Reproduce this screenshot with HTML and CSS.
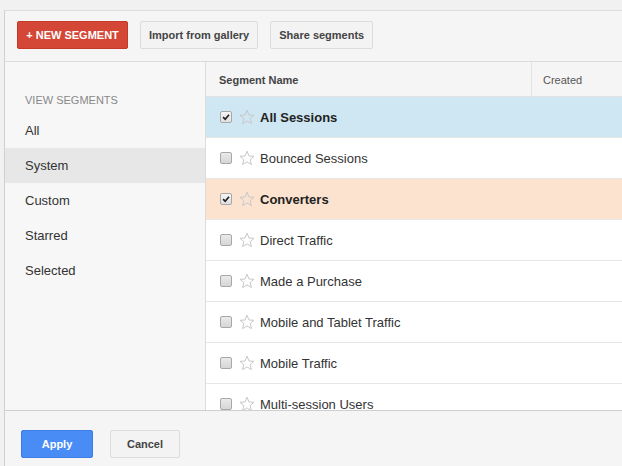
FILE: index.html
```html
<!DOCTYPE html>
<html>
<head>
<meta charset="utf-8">
<link rel="stylesheet" href="styles.css">
</head>
<body>
<div class="panel">
  <div class="toolbar">
    <button class="btn btn-red">+ NEW SEGMENT</button>
    <button class="btn">Import from gallery</button>
    <button class="btn">Share segments</button>
  </div>
  <div class="main">
    <aside class="sidebar">
      <div class="side-title">VIEW SEGMENTS</div>
      <div class="side-item">All</div>
      <div class="side-item active">System</div>
      <div class="side-item">Custom</div>
      <div class="side-item">Starred</div>
      <div class="side-item">Selected</div>
    </aside>
    <section class="table">
      <div class="thead">
        <div class="th th-name">Segment Name</div>
        <div class="th th-created">Created</div>
      </div>
      <div class="rows">
        <div class="row sel-blue">
          <span class="cb checked"><svg viewBox="0 0 12 12" width="12" height="12"><path d="M2.5 6.2 L5 8.6 L9.6 3.2" fill="none" stroke="#222" stroke-width="2"/></svg></span>
          <svg class="star" viewBox="0 0 16 16" width="16" height="16"><path d="M8 1.2 L10 6 L15 6.3 L11.2 9.5 L12.4 14.6 L8 11.9 L3.6 14.6 L4.8 9.5 L1 6.3 L6 6 Z" fill="none" stroke="#c8c8c8" stroke-width="1"/></svg>
          <span class="name bold">All Sessions</span>
        </div>
        <div class="row">
          <span class="cb"></span>
          <svg class="star" viewBox="0 0 16 16" width="16" height="16"><path d="M8 1.2 L10 6 L15 6.3 L11.2 9.5 L12.4 14.6 L8 11.9 L3.6 14.6 L4.8 9.5 L1 6.3 L6 6 Z" fill="none" stroke="#c8c8c8" stroke-width="1"/></svg>
          <span class="name">Bounced Sessions</span>
        </div>
        <div class="row sel-peach">
          <span class="cb checked"><svg viewBox="0 0 12 12" width="12" height="12"><path d="M2.5 6.2 L5 8.6 L9.6 3.2" fill="none" stroke="#222" stroke-width="2"/></svg></span>
          <svg class="star" viewBox="0 0 16 16" width="16" height="16"><path d="M8 1.2 L10 6 L15 6.3 L11.2 9.5 L12.4 14.6 L8 11.9 L3.6 14.6 L4.8 9.5 L1 6.3 L6 6 Z" fill="none" stroke="#c8c8c8" stroke-width="1"/></svg>
          <span class="name bold">Converters</span>
        </div>
        <div class="row">
          <span class="cb"></span>
          <svg class="star" viewBox="0 0 16 16" width="16" height="16"><path d="M8 1.2 L10 6 L15 6.3 L11.2 9.5 L12.4 14.6 L8 11.9 L3.6 14.6 L4.8 9.5 L1 6.3 L6 6 Z" fill="none" stroke="#c8c8c8" stroke-width="1"/></svg>
          <span class="name">Direct Traffic</span>
        </div>
        <div class="row">
          <span class="cb"></span>
          <svg class="star" viewBox="0 0 16 16" width="16" height="16"><path d="M8 1.2 L10 6 L15 6.3 L11.2 9.5 L12.4 14.6 L8 11.9 L3.6 14.6 L4.8 9.5 L1 6.3 L6 6 Z" fill="none" stroke="#c8c8c8" stroke-width="1"/></svg>
          <span class="name">Made a Purchase</span>
        </div>
        <div class="row">
          <span class="cb"></span>
          <svg class="star" viewBox="0 0 16 16" width="16" height="16"><path d="M8 1.2 L10 6 L15 6.3 L11.2 9.5 L12.4 14.6 L8 11.9 L3.6 14.6 L4.8 9.5 L1 6.3 L6 6 Z" fill="none" stroke="#c8c8c8" stroke-width="1"/></svg>
          <span class="name">Mobile and Tablet Traffic</span>
        </div>
        <div class="row">
          <span class="cb"></span>
          <svg class="star" viewBox="0 0 16 16" width="16" height="16"><path d="M8 1.2 L10 6 L15 6.3 L11.2 9.5 L12.4 14.6 L8 11.9 L3.6 14.6 L4.8 9.5 L1 6.3 L6 6 Z" fill="none" stroke="#c8c8c8" stroke-width="1"/></svg>
          <span class="name">Mobile Traffic</span>
        </div>
        <div class="row">
          <span class="cb"></span>
          <svg class="star" viewBox="0 0 16 16" width="16" height="16"><path d="M8 1.2 L10 6 L15 6.3 L11.2 9.5 L12.4 14.6 L8 11.9 L3.6 14.6 L4.8 9.5 L1 6.3 L6 6 Z" fill="none" stroke="#c8c8c8" stroke-width="1"/></svg>
          <span class="name">Multi-session Users</span>
        </div>
      </div>
    </section>
  </div>
  <div class="footer">
    <button class="btn btn-blue">Apply</button>
    <button class="btn btn-cancel">Cancel</button>
  </div>
</div>
</body>
</html>
```
FILE: styles.css
```css
html, body {
  margin: 0;
  padding: 0;
  width: 622px;
  height: 466px;
  overflow: hidden;
  background: #f1f1f1;
  font-family: "Liberation Sans", Arial, sans-serif;
  color: #333;
}
.panel {
  margin: 10px 0 0 4px;
  height: 456px;
  border-top: 1px solid #dcdcdc;
  border-left: 1px solid #d0d0d0;
  background: #f5f5f5;
  display: flex;
  flex-direction: column;
  box-sizing: border-box;
}
.toolbar {
  height: 51px;
  box-sizing: border-box;
  padding: 10px 12px 0;
  display: flex;
  gap: 12px;
  border-bottom: 1px solid #dcdcdc;
  flex: none;
}
.btn {
  height: 28px;
  box-sizing: border-box;
  border: 1px solid #dcdcdc;
  border-radius: 2px;
  background: #f3f3f3;
  font-family: "Liberation Sans", Arial, sans-serif;
  font-size: 11px;
  font-weight: bold;
  color: #444;
  padding: 0 8px;
  cursor: pointer;
}
.btn-red {
  background: #d44636;
  border-color: #c53727;
  color: #fff;
  width: 111px;
  padding: 0;
}
.main {
  display: flex;
  height: 348px;
  flex: none;
}
.sidebar {
  width: 200px;
  flex: none;
  background: #f7f7f7;
  border-right: 1px solid #dcdcdc;
  padding-top: 32px;
  box-sizing: content-box;
}
.side-title {
  font-size: 11px;
  color: #888;
  padding-left: 20px;
  height: 19px;
  line-height: 13px;
}
.side-item {
  height: 35px;
  line-height: 35px;
  font-size: 13px;
  color: #333;
  padding-left: 20px;
}
.side-item.active {
  background: #e7e7e7;
}
.table {
  flex: 1;
  background: #fff;
  display: flex;
  flex-direction: column;
  overflow: hidden;
}
.thead {
  height: 34px;
  background: #f5f5f5;
  border-bottom: 1px solid #e2e2e2;
  display: flex;
  flex: none;
}
.th {
  font-size: 11px;
  line-height: 34px;
  padding-top: 1px;
  color: #444;
}
.th-name {
  width: 312px;
  padding-left: 13px;
  font-weight: bold;
  border-right: 1px solid #e2e2e2;
}
.th-created {
  padding-left: 11px;
  color: #555;
}
.rows {
  flex: 1;
  overflow: hidden;
}
.row {
  height: 40px;
  border-bottom: 1px solid #e6e6e6;
  display: flex;
  align-items: center;
  padding-left: 14px;
}
.sel-blue { background: #cfe6f3; }
.sel-peach { background: #fbe3d0; }
.cb {
  width: 12px;
  height: 12px;
  box-sizing: border-box;
  border: 1px solid #a8a8a8;
  border-radius: 2px;
  background: linear-gradient(#eaeaea, #d6d6d6);
  display: flex;
  align-items: center;
  justify-content: center;
  flex: none;
}
.cb svg { display: block; }
.cb.checked { background: linear-gradient(#f4f4f4, #e0e0e0); }
.star {
  margin-left: 7px;
  margin-right: 5px;
  flex: none;
}
.name {
  font-size: 13px;
  color: #333;
}
.name.bold {
  font-weight: bold;
  color: #222;
}
.footer {
  flex: 1;
  border-top: 1px solid #cfcfcf;
  background: #f5f5f5;
  display: flex;
  gap: 17px;
  padding: 19px 0 0 16px;
}
.btn-blue {
  background: #4a8cf5;
  border-color: #3b7de0;
  color: #fff;
  width: 72px;
}
.btn-cancel {
  width: 70px;
  background: #f3f3f3;
}
```
